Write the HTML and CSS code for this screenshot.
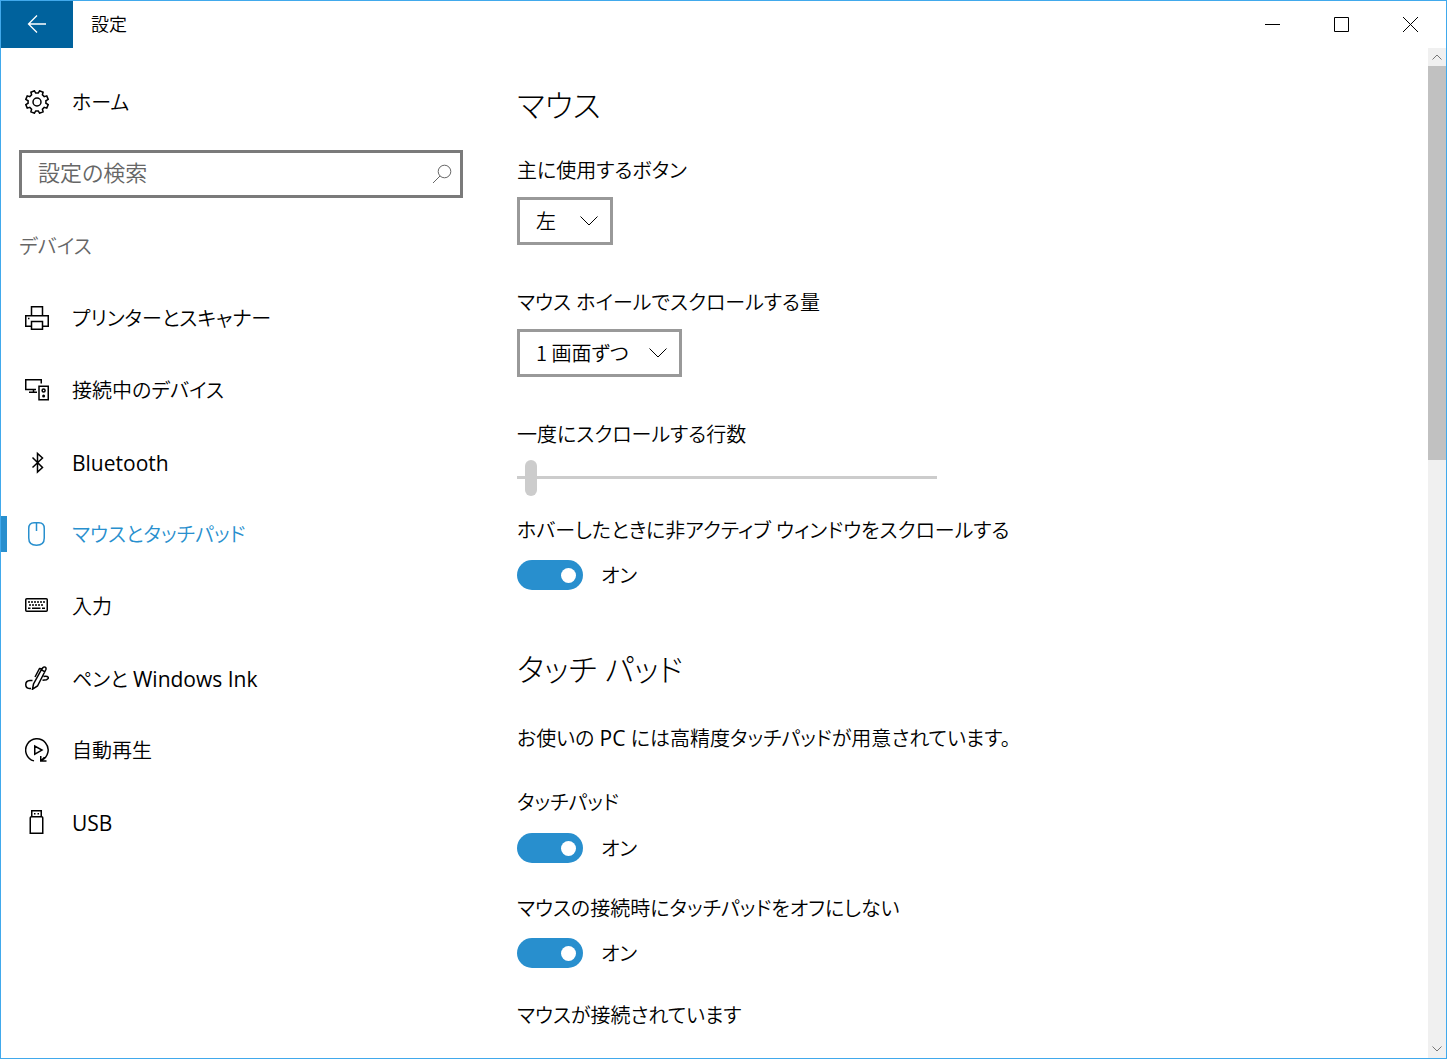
FILE: index.html
```html
<!DOCTYPE html>
<html lang="ja">
<head>
    <meta charset="UTF-8">
    <meta name="viewport" content="width=device-width, initial-scale=1.0">
    <title>設定</title>
    <link rel="stylesheet" href="styles.css">
</head>
<body>
    <div class="window">
        <header class="titlebar">
            <button class="back" aria-label="戻る">
                <svg width="20" height="20" viewBox="0 0 20 20"><path d="M19 10H1.5M10 1.5L1.5 10l8.500 8.500"/></svg>
            </button>
            <span class="title">設定</span>
            <div class="controls">
                <button aria-label="最小化"><svg width="15" height="15" viewBox="0 0 15 15"><path d="M0 7.500h15"/></svg></button>
                <button aria-label="最大化"><svg width="15" height="15" viewBox="0 0 15 15"><path d="M.5.5h14v14H.5z"/></svg></button>
                <button aria-label="閉じる"><svg width="15" height="15" viewBox="0 0 15 15"><path d="M0 0l15 15M15 0L0 15"/></svg></button>
            </div>
        </header>

        <div class="body">
            <aside class="sidebar">
                <a class="item" href="#">
                    <svg class="icon" viewBox="0 0 24 24"><g transform="translate(12 12)"><path d="M11.200-2.600L8.900-1.250v2.500L11.200 2.600 9.750 6.100 7.200 5.400 5.400 7.200 6.100 9.750 2.600 11.200 1.250 8.900h-2.500L-2.600 11.200-6.100 9.750-5.400 7.200-7.200 5.400-9.750 6.100-11.200 2.600-8.900 1.250v-2.500L-11.200-2.600-9.750-6.100-7.200-5.400-5.400-7.200-6.100-9.750-2.600-11.200-1.250-8.900h2.500L2.600-11.200 6.100-9.750 5.400-7.200 7.200-5.400 9.750-6.100z"/><circle r="4"/></g></svg>
                    <span>ホーム</span>
                </a>

                <div class="search">
                    <input type="search" placeholder="設定の検索" aria-label="設定の検索">
                    <svg width="20" height="20" viewBox="0 0 20 20"><circle cx="12.500" cy="7.500" r="6.300"/><path d="M8 12L1 19"/></svg>
                </div>

                <h2 class="group">デバイス</h2>

                <nav>
                    <a class="item" href="#">
                        <svg class="icon" viewBox="0 0 24 24"><path d="M6.500 9.500V.75h11V9.500M6.500 20.250H.75V9.750h22.500v10.500H17.500M6.500 15.500h11v7.750h-11z"/><path d="M3 12.500h1.500"/></svg>
                        <span>プリンターとスキャナー</span>
                    </a>
                    <a class="item" href="#">
                        <svg class="icon" viewBox="0 0 24 24"><path d="M16.250 5.500V1.750H.75v9.750H11M8.500 11.500v3M4 14.250h8M14 8.250h9.250v13.500H14z"/><circle cx="18.600" cy="12.500" r="1.500"/><circle class="fill" cx="18.600" cy="18" r="1.500"/></svg>
                        <span>接続中のデバイス</span>
                    </a>
                    <a class="item" href="#">
                        <svg class="icon" viewBox="0 0 24 24"><path d="M7.500 7.500l10 10-5 4.500V3.500l5 4.500-10 9.500"/></svg>
                        <span class="latin">Bluetooth</span>
                    </a>
                    <a class="item active" href="#">
                        <svg class="icon" viewBox="0 0 24 24"><path d="M3.750 6.500Q3.750.75 9 .75h5q5.250 0 5.250 5.750V16q0 7.250-7.750 7.250T3.750 16zM11.500 1v8"/></svg>
                        <span>マウスとタッチパッド</span>
                    </a>
                    <a class="item" href="#">
                        <svg class="icon" viewBox="0 0 24 24"><rect x=".75" y="4.750" width="21.500" height="12.500" rx="1"/><path d="M3 8h17" stroke-dasharray="2 1"/><path d="M4 11h15" stroke-dasharray="2 1"/><path d="M3 14.250h2.500M7 14.250h8.500M17 14.250h3"/></svg>
                        <span>入力</span>
                    </a>
                    <a class="item" href="#">
                        <svg class="icon" viewBox="0 0 24 24"><path d="M7.500 23.200l1-5.200L16 4.500l2-3q1-1 2.200-.3t.7 2.300L12.500 20zM16.500 3.800l3.500 2M10 11l4.500-8.500 2.500.2M7.500 14.500H5Q.75 14.750.75 18.500t3.500 4H6M18.500 10.500c5-.8 6.500 1.500 3 3.250l-4 .5"/></svg>
                        <span>ペンと <span class="latin">Windows Ink</span></span>
                    </a>
                    <a class="item" href="#">
                        <svg class="icon" viewBox="0 0 24 24"><path d="M9 22.900A11.250 11.250 0 1 1 16.500 22.300M15.750 18v5H21.500M16 22.750l3.500-3.500M9.750 8v8.250L17 12.100z"/></svg>
                        <span>自動再生</span>
                    </a>
                    <a class="item" href="#">
                        <svg class="icon" viewBox="0 0 24 24"><path d="M6.750 6.750v-6h9.500v6M6.500 6.750h10.250q1 0 1 1v15.500H5.250V7.750q0-1 1.250-1zM9 3.750h1.500M12.500 3.750H14"/></svg>
                        <span class="latin">USB</span>
                    </a>
                </nav>
            </aside>

            <main class="content">
                <section>
                    <h1>マウス</h1>
                    <div class="field">
                        <label for="button">主に使用するボタン</label>
                        <div class="select">
                            <select id="button"><option>左</option><option>右</option></select>
                            <svg width="18" height="10" viewBox="0 0 18 10"><path d="M.5.5L9 9 17.500.5"/></svg>
                        </div>
                    </div>
                    <div class="field">
                        <label for="wheel">マウス ホイールでスクロールする量</label>
                        <div class="select wide">
                            <select id="wheel"><option>1 画面ずつ</option><option>複数行ずつ</option></select>
                            <svg width="18" height="10" viewBox="0 0 18 10"><path d="M.5.5L9 9 17.500.5"/></svg>
                        </div>
                    </div>
                    <div class="field slider">
                        <label for="lines">一度にスクロールする行数</label>
                        <input type="range" id="lines" min="1" max="100" value="3" disabled>
                    </div>
                    <div class="field">
                        <label for="hover">ホバーしたときに非アクティブ ウィンドウをスクロールする</label>
                        <div class="toggle"><input type="checkbox" id="hover" checked><span>オン</span></div>
                    </div>
                </section>

                <section>
                    <h1>タッチ パッド</h1>
                    <p>お使いの <span class="latin">PC</span> には高精度タッチパッドが用意されています。</p>
                    <div class="field">
                        <label for="touchpad">タッチパッド</label>
                        <div class="toggle"><input type="checkbox" id="touchpad" checked><span>オン</span></div>
                    </div>
                    <div class="field">
                        <label for="keep">マウスの接続時にタッチパッドをオフにしない</label>
                        <div class="toggle"><input type="checkbox" id="keep" checked><span>オン</span></div>
                    </div>
                    <p>マウスが接続されています</p>
                </section>
            </main>

            <div class="scrollbar">
                <button aria-label="上へ"><svg width="10" height="6" viewBox="0 0 10 6"><path d="M.5 5.500L5 1l4.500 4.500"/></svg></button>
                <div class="track"><div class="thumb"></div></div>
                <button aria-label="下へ"><svg width="10" height="6" viewBox="0 0 10 6"><path d="M.5.5L5 5 9.500.5"/></svg></button>
            </div>
        </div>
    </div>
</body>
</html>
```
FILE: styles.css
```css
* {
    box-sizing: border-box;
}
body {
    margin: 0;
    color: #000;
    background-color: #fff;
    font-family: "Open Sans", "Noto Sans CJK JP", sans-serif;
    font-size: 20px;
    font-weight: 350;
    line-height: 34px;
    font-feature-settings: "palt";
}
button, input, select {
    font: inherit;
    font-feature-settings: inherit;
    color: inherit;
    margin: 0;
}
button {
    display: flex;
    align-items: center;
    justify-content: center;
    padding: 0;
    border: none;
    background: none;
}
svg {
    flex: none;
    fill: none;
    stroke: currentColor;
}
h1, h2, p {
    margin: 0;
    font-weight: 350;
}

.window {
    display: flex;
    flex-direction: column;
    min-height: 100vh;
    border: 1px solid #41a9ec;
}

/* title bar */
.titlebar {
    display: flex;
    align-items: center;
    height: 47px;
}
.back {
    width: 72px;
    height: 47px;
    padding-bottom: 2px;
    background-color: #00629d;
    color: #fff;
}
.back svg {
    stroke-width: 1.3;
}
.title {
    margin-left: 18px;
    padding-bottom: 2px;
    font-size: 18px;
}
.controls {
    display: flex;
    margin-left: auto;
    margin-right: 1px;
}
.controls button {
    width: 69px;
    height: 47px;
}

.body {
    display: flex;
    flex: 1;
}

/* sidebar */
.sidebar {
    width: 480px;
    padding-top: 18px;
}
.item {
    display: flex;
    align-items: center;
    height: 72px;
    color: #000;
    text-decoration: none;
}
.item::before {
    content: "";
    width: 6px;
    height: 36px;
    margin-right: 18px;
}
.item > span {
    padding-top: 2px;
}
.latin {
    font-size: 21px;
    font-weight: 400;
}
.icon {
    width: 24px;
    height: 24px;
    margin-right: 23px;
    stroke-width: 1.5;
}
.icon .fill {
    fill: currentColor;
    stroke: none;
}
.active {
    color: #288fce;
}
.active::before {
    background-color: #288fce;
}
.search {
    display: flex;
    align-items: center;
    height: 48px;
    margin: 12px 18px 24px;
    padding: 0 8px 0 16px;
    border: 3px solid #7a7a7a;
    color: #666;
}
.search input {
    flex: 1;
    min-width: 0;
    padding: 0 0 4px;
    border: none;
    outline: none;
    background: none;
    font-size: 22px;
}
.search input::placeholder {
    color: #666;
}
.group {
    margin: 0 18px 10px;
    font-size: 20px;
    line-height: 50px;
    color: #666;
}

/* settings */
.content {
    flex: 1;
    padding: 33px 36px 24px;
}
section + section {
    margin-top: 55px;
}
h1 {
    margin-bottom: 25px;
    font-size: 31px;
    font-weight: 300;
    line-height: 48px;
}
section + section h1 {
    margin-bottom: 28px;
}
p {
    height: 34px;
}
.field label {
    display: block;
    margin-bottom: 9px;
}
.field + .field {
    margin-top: 41px;
}
.field.slider label {
    margin-bottom: 8px;
}
.field.slider + .field {
    margin-top: 18px;
}
.select {
    display: grid;
    align-items: center;
    width: 96px;
}
.select.wide {
    width: 165px;
}
.select select,
.select svg {
    grid-area: 1 / 1;
}
.select select {
    appearance: none;
    height: 48px;
    padding: 0 16px;
    border: 3px solid #999;
    border-radius: 0;
    background-color: #fff;
    font-family: "Noto Sans CJK JP", sans-serif;
}
.select svg {
    justify-self: end;
    margin-right: 15px;
    pointer-events: none;
}

input[type="range"] {
    appearance: none;
    display: block;
    width: 420px;
    height: 36px;
    padding-bottom: 1px;
    background: none;
}
input[type="range"]::-webkit-slider-runnable-track {
    height: 3px;
    background-color: #ccc;
}
input[type="range"]::-webkit-slider-thumb {
    appearance: none;
    width: 12px;
    height: 36px;
    margin-top: -16px;
    border-radius: 6px;
    background-color: #ccc;
}

.toggle {
    display: flex;
    align-items: center;
    gap: 18px;
    height: 30px;
    margin-top: 12px;
}
.toggle span {
    padding-top: 2px;
}
.toggle input {
    appearance: none;
    display: flex;
    align-items: center;
    justify-content: flex-end;
    width: 66px;
    height: 30px;
    padding-right: 7px;
    border-radius: 15px;
    background-color: #288fce;
}
.toggle input::before {
    content: "";
    width: 15px;
    height: 15px;
    border-radius: 50%;
    background-color: #fff;
}
p + .field {
    margin-top: 31px;
}
p + .field .toggle {
    margin-top: 13px;
}
p + .field + .field {
    margin-top: 29px;
}
.field + p {
    margin-top: 31px;
}

/* scrollbar */
.scrollbar {
    display: flex;
    flex-direction: column;
    width: 18px;
    background-color: #f0f0f0;
    color: #777;
}
.scrollbar button {
    height: 18px;
}
.track {
    flex: 1;
    display: flex;
    flex-direction: column;
}
.thumb {
    flex: 0 0 40.5%;
    background-color: #c1c1c1;
}
```
